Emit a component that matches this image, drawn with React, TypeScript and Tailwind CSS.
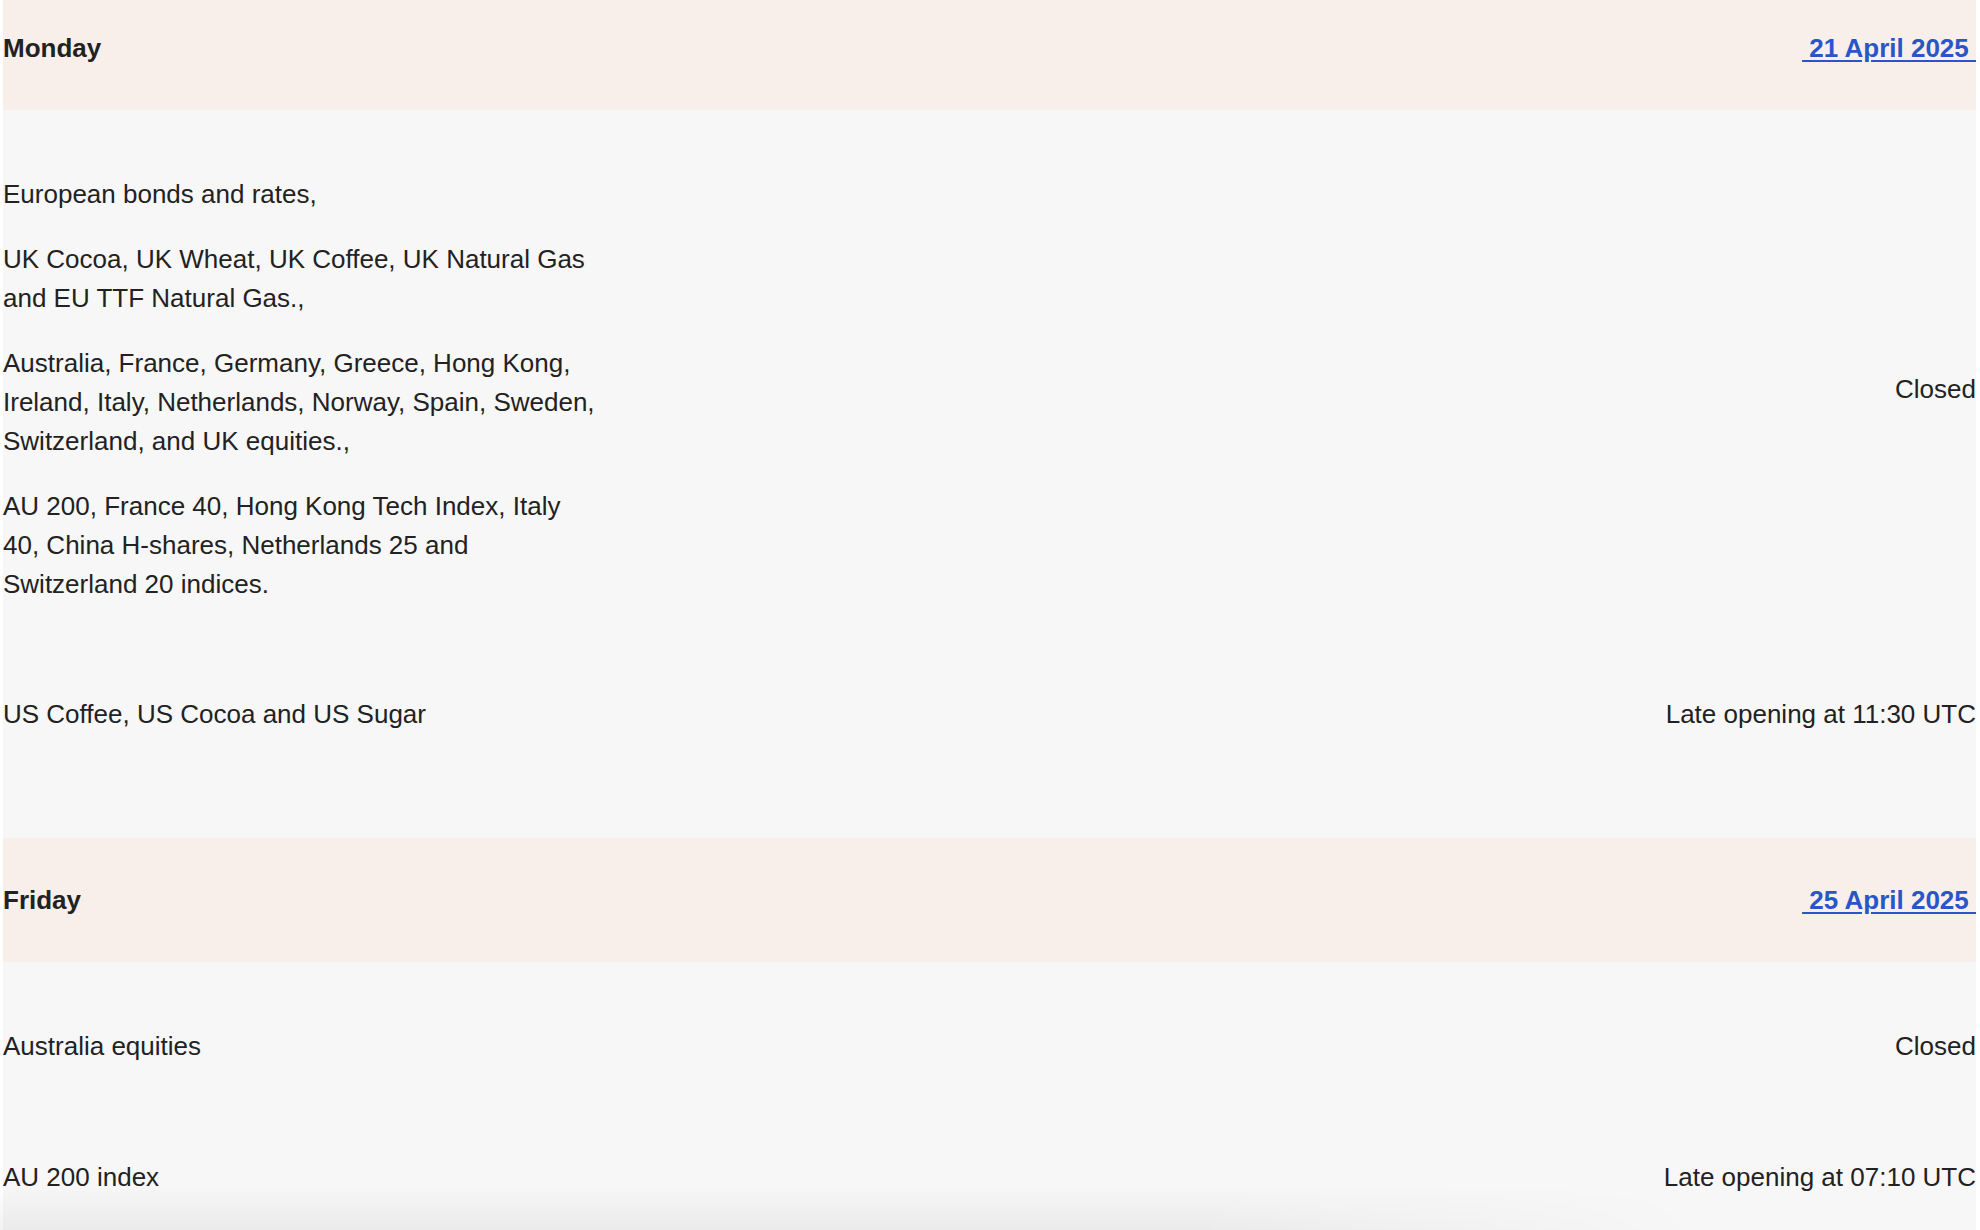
import React from "react";

type Row = { items: string[]; status: string };
type Day = { day: string; date: string; rows: Row[] };

const days: Day[] = [
  {
    day: "Monday",
    date: "21 April 2025",
    rows: [
      {
        items: [
          "European bonds and rates,",
          "UK Cocoa, UK Wheat, UK Coffee, UK Natural Gas and EU TTF Natural Gas.,",
          "Australia, France, Germany, Greece, Hong Kong, Ireland, Italy, Netherlands, Norway, Spain, Sweden, Switzerland, and UK equities.,",
          "AU 200, France 40, Hong Kong Tech Index, Italy 40, China H-shares, Netherlands 25 and Switzerland 20 indices.",
        ],
        status: "Closed",
      },
      { items: ["US Coffee, US Cocoa and US Sugar"], status: "Late opening at 11:30 UTC" },
    ],
  },
  {
    day: "Friday",
    date: "25 April 2025",
    rows: [
      { items: ["Australia equities"], status: "Closed" },
      { items: ["AU 200 index"], status: "Late opening at 07:10 UTC" },
    ],
  },
];

export default function App() {
  return (
    <div className="relative h-[1230px] overflow-hidden bg-white pl-[3px] pr-[4px] text-[26px] text-[#222222] font-['Liberation_Sans',Arial,sans-serif]">
      <div className="-mt-[14px]">
        {days.map((d) => (
          <section key={d.day}>
            {/* day band */}
            <div className="flex h-[124px] items-center justify-between bg-[#f8efea]">
              <span className="font-bold">{d.day}</span>
              <a href="#" className="font-bold text-[#2a55c9] underline underline-offset-[3px]">
                {"\u00a0" + d.date + "\u00a0"}
              </a>
            </div>

            {/* rows */}
            <div className="bg-[#f7f7f7] pb-[77px]">
              {d.rows.map((r, i) => (
                <div key={i} className="flex items-center justify-between pt-[65px] pb-[27px] leading-[38.75px]">
                  <div className="flex w-[595px] flex-col gap-[26.5px]">
                    {r.items.map((t) => (
                      <p key={t}>{t}</p>
                    ))}
                  </div>
                  <span>{r.status}</span>
                </div>
              ))}
            </div>
          </section>
        ))}
      </div>

      {/* soft shadow at the bottom edge */}
      <div className="pointer-events-none absolute bottom-0 left-0 h-[45px] w-[1700px] bg-gradient-to-b from-transparent to-black/[0.05] [mask-image:linear-gradient(to_right,black_70%,transparent)]" />
    </div>
  );
}
